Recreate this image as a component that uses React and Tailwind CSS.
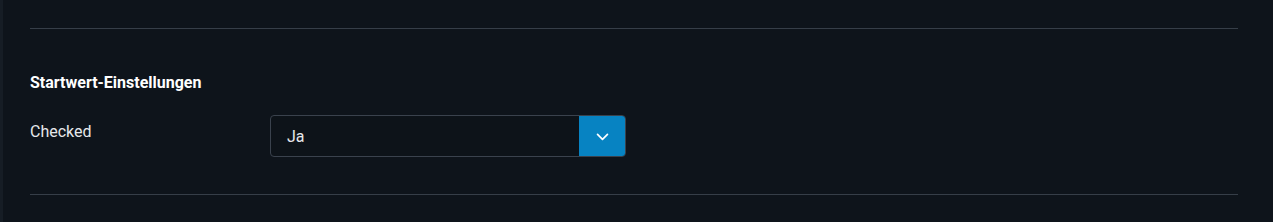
import React from "react";

export default function App() {
  return (
    <div
      className="h-[222px] w-full bg-[#0e141b] border-l-[3px] border-[#161d25] text-white"
      style={{ fontFamily: "Roboto, 'Liberation Sans', sans-serif" }}
    >
      <div className="pl-[27px] pr-[35px] pt-[28px]">
        <div className="h-px bg-[#363e48]" />

        <h3 className="mt-[44px] text-base leading-5 font-bold text-white">Startwert-Einstellungen</h3>

        <div className="mt-[22px] flex items-start">
          <label className="w-[240px] pt-[7px] text-base leading-5 text-[#e6e8eb]">Checked</label>
          <div className="flex h-[42px] w-[356px] overflow-hidden rounded-[4px] border border-[#3a424d] bg-[#0d1319]">
            <div className="flex flex-1 items-center pl-4 pt-px text-base text-[#e6e8eb]">Ja</div>
            <button
              type="button"
              aria-label="Öffnen"
              className="flex w-[46px] items-center justify-center bg-[#0783c2] text-white"
            >
              <svg width="17" height="17" viewBox="0 0 24 24">
                <path d="M5 9l7 7 7-7" fill="none" stroke="currentColor" strokeWidth="2.4" strokeLinecap="round" strokeLinejoin="round" />
              </svg>
            </button>
          </div>
        </div>

        <div className="mt-[37px] h-px bg-[#363e48]" />
      </div>
    </div>
  );
}
